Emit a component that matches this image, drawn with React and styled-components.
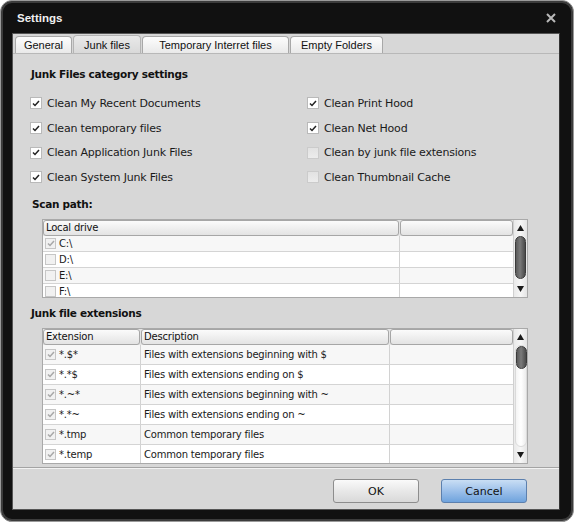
import React from "react";
import styled, { createGlobalStyle, css } from "styled-components";

const GlobalStyle = createGlobalStyle`
  html, body {
    margin: 0;
    padding: 0;
    background: #ffffff;
  }
  * {
    box-sizing: border-box;
  }
`;

const UI_FONT = `"DejaVu Sans", "Liberation Sans", sans-serif`;
const TAB_FONT = `"Liberation Sans", Arial, sans-serif`;

const Window = styled.div`
  width: 574px;
  height: 522px;
  background: #111111;
  border: 1px solid #9a9a9a;
  border-radius: 12px;
  box-shadow: inset 0 0 0 2px #3c3c3c;
  padding: 0 13px 11px 11px;
  display: flex;
  flex-direction: column;
  font-family: ${UI_FONT};
`;

const TitleBar = styled.div`
  height: 32px;
  display: flex;
  align-items: center;
  justify-content: space-between;
  padding: 2px 3px 0 5px;
`;

const Title = styled.span`
  color: #f0f0f0;
  font-family: ${TAB_FONT};
  font-size: 11.5px;
  font-weight: bold;
`;

const CloseButton = styled.div`
  width: 12px;
  height: 12px;
  display: flex;
  align-items: center;
  justify-content: center;
`;

const Client = styled.div`
  flex: 1;
  background: #d7d7d7;
  border: 1px solid #555;
  border-right-color: #333;
  display: flex;
  flex-direction: column;
`;

const TabBar = styled.div`
  display: flex;
  gap: 1px;
  padding: 0 0 0 2px;
  height: 19px;
  align-items: flex-end;
`;

const Tab = styled.div`
  width: ${(p) => p.$w}px;
  height: 17px;
  border: 1px solid #a8a8a8;
  border-bottom: none;
  border-radius: 4px 4px 0 0;
  font-family: ${TAB_FONT};
  font-size: 11px;
  color: #111;
  display: flex;
  align-items: center;
  justify-content: center;
  background: linear-gradient(#fdfdfd, #e9e9e9);
  ${(p) =>
    p.$active &&
    css`
      height: 18px;
      background: linear-gradient(#e9e9e9, #d9d9d9);
      border-color: #b4b4b4;
    `}
`;

const Panel = styled.div`
  flex: 1;
  border-top: 1px solid #b8b8b8;
  border-bottom: 1px solid #a4a4a4;
  padding: 12px 0 0 17px;
  display: flex;
  flex-direction: column;
`;

const Heading = styled.div`
  font-size: 10.5px;
  letter-spacing: -0.3px;
  font-weight: bold;
  color: #111;
  line-height: 16px;
  margin-left: ${(p) => p.$indent || 1}px;
  margin-top: ${(p) => p.$top || 0}px;
`;

const OptionGrid = styled.div`
  display: grid;
  grid-template-columns: 277px 1fr;
  grid-auto-rows: 24.7px;
  margin-top: 9px;
`;

const Option = styled.label`
  display: flex;
  align-items: center;
  gap: 5px;
  font-size: 11px;
  letter-spacing: -0.2px;
  color: #1a1a1a;
`;

const Box = styled.span`
  width: 12px;
  height: 12px;
  flex: none;
  display: flex;
  align-items: center;
  justify-content: center;
  border: 1px solid ${(p) => (p.$on ? "#b9b9b9" : "#cbcbcb")};
  background: ${(p) => (p.$on ? "#ffffff" : "linear-gradient(#e2e2e2, #ececec)")};
`;

const SmallBox = styled.span`
  width: 11px;
  height: 11px;
  flex: none;
  display: flex;
  align-items: center;
  justify-content: center;
  border: 1px solid #c6c6c6;
  background: #f1f1f1;
`;

const Table = styled.div`
  margin: 7px 0 0 12px;
  width: 486px;
  height: ${(p) => p.$h}px;
  border: 1px solid #a9a9a9;
  background: #ffffff;
  display: flex;
  overflow: hidden;
`;

const ListArea = styled.div`
  flex: 1;
  display: flex;
  flex-direction: column;
  overflow: hidden;
`;

const HeaderRow = styled.div`
  display: grid;
  grid-template-columns: ${(p) => p.$cols};
  height: 16px;
  flex: none;
  background: #e4e4e4;
`;

const HeaderCell = styled.div`
  border: 1px solid #a6a6a6;
  border-radius: 3px;
  background: linear-gradient(#fbfbfb, #e3e3e3);
  font-size: 10px;
  letter-spacing: -0.2px;
  color: #111;
  padding-left: 2px;
  display: flex;
  align-items: center;
  margin-right: 1px;
`;

const Row = styled.div`
  display: grid;
  grid-template-columns: ${(p) => p.$cols};
  height: ${(p) => p.$h}px;
  flex: none;
  border-bottom: 1px solid #d4d4d4;
  background: ${(p) => (p.$odd ? "#ffffff" : "#f7f7f7")};
`;

const Cell = styled.div`
  display: flex;
  align-items: center;
  gap: 3px;
  padding-left: ${(p) => p.$pad ?? 2}px;
  font-size: 10px;
  letter-spacing: -0.2px;
  color: #1a1a1a;
  border-right: 1px solid #d2d2d2;
  white-space: nowrap;
  overflow: hidden;
`;

const ScrollBar = styled.div`
  width: 14px;
  flex: none;
  background: linear-gradient(90deg, #e9e9e9, #f6f6f6, #e4e4e4);
  border-left: 1px solid #d0d0d0;
  display: flex;
  flex-direction: column;
  align-items: center;
`;

const Arrow = styled.div`
  height: 16px;
  flex: none;
  display: flex;
  align-items: center;
  justify-content: center;
`;

const Track = styled.div`
  flex: 1;
  width: 12px;
  border-radius: 6px;
  background: ${(p) => (p.$light ? "linear-gradient(90deg, #f4f4f4, #ffffff, #ececec)" : "transparent")};
  border: ${(p) => (p.$light ? "1px solid #dadada" : "none")};
`;

const Thumb = styled.div`
  height: ${(p) => p.$h}px;
  width: 11px;
  margin: 0 auto;
  border-radius: 6px;
  border: 1px solid #3a3a3a;
  background: linear-gradient(90deg, #5a5a5a, #7a7a7a 45%, #4a4a4a);
`;

const Footer = styled.div`
  height: 41px;
  display: flex;
  justify-content: flex-end;
  gap: 22px;
  padding: 10px 32px 0 0;
  border-top: 1px solid #f2f2f2;
`;

const Button = styled.button`
  width: 86px;
  height: 24px;
  border-radius: 3px;
  font-family: ${UI_FONT};
  font-size: 11px;
  color: #111;
  border: 1px solid #8d8d8d;
  background: linear-gradient(#fafafa, #e8e8e8 50%, #d9d9d9);
  ${(p) =>
    p.$primary &&
    css`
      border-color: #5c80ae;
      background: linear-gradient(#c9def4, #9cc0ea 50%, #6fa3dd);
    `}
`;

const Check = ({ color = "#222" }) => (
  <svg width="8" height="7" viewBox="0 0 8 7">
    <path d="M1 3.5 L3 5.5 L7 1" fill="none" stroke={color} strokeWidth="1.5" />
  </svg>
);

const ArrowIcon = ({ down }) => (
  <svg width="7" height="6" viewBox="0 0 7 6">
    <path d={down ? "M0 0 L7 0 L3.5 6 Z" : "M3.5 0 L7 6 L0 6 Z"} fill="#1a1a1a" />
  </svg>
);

const leftOptions = [
  ["Clean My Recent Documents", true],
  ["Clean temporary files", true],
  ["Clean Application Junk Files", true],
  ["Clean System Junk Files", true],
];

const rightOptions = [
  ["Clean Print Hood", true],
  ["Clean Net Hood", true],
  ["Clean by junk file extensions", false],
  ["Clean Thumbnail Cache", false],
];

const drives = [
  ["C:\\", true],
  ["D:\\", false],
  ["E:\\", false],
  ["F:\\", false],
];

const extensions = [
  ["*.$*", "Files with extensions beginning with $"],
  ["*.*$", "Files with extensions ending on $"],
  ["*.~*", "Files with extensions beginning with ~"],
  ["*.*~", "Files with extensions ending on ~"],
  ["*.tmp", "Common temporary files"],
  ["*.temp", "Common temporary files"],
];

const driveCols = "357px 114px";
const extCols = "98px 249px 124px";

export default function App() {
  const options = [];
  for (let i = 0; i < 4; i++) {
    options.push(leftOptions[i], rightOptions[i]);
  }

  return (
    <>
      <GlobalStyle />
      <Window>
        <TitleBar>
          <Title>Settings</Title>
          <CloseButton>
            <svg width="10" height="10" viewBox="0 0 10 10">
              <path d="M1 1 L9 9 M9 1 L1 9" stroke="#b9b9b9" strokeWidth="2" />
            </svg>
          </CloseButton>
        </TitleBar>
        <Client>
          <TabBar>
            <Tab $w={57}>General</Tab>
            <Tab $w={68} $active>
              Junk files
            </Tab>
            <Tab $w={147}>Temporary Interret files</Tab>
            <Tab $w={93}>Empty Folders</Tab>
          </TabBar>
          <Panel>
            <Heading>Junk Files category settings</Heading>
            <OptionGrid>
              {options.map(([label, on]) => (
                <Option key={label}>
                  <Box $on={on}>{on && <Check />}</Box>
                  {label}
                </Option>
              ))}
            </OptionGrid>
            <Heading $top={6} $indent={2}>
              Scan path:
            </Heading>
            <Table $h={79}>
              <ListArea>
                <HeaderRow $cols={driveCols}>
                  <HeaderCell>Local drive</HeaderCell>
                  <HeaderCell />
                </HeaderRow>
                {drives.map(([d, on], i) => (
                  <Row key={d} $cols={driveCols} $h={16} $odd={i % 2 === 1}>
                    <Cell>
                      <SmallBox>{on && <Check color="#a8a8a8" />}</SmallBox>
                      {d}
                    </Cell>
                    <Cell />
                  </Row>
                ))}
              </ListArea>
              <ScrollBar>
                <Arrow>
                  <ArrowIcon />
                </Arrow>
                <Track>
                  <Thumb $h={43} />
                </Track>
                <Arrow>
                  <ArrowIcon down />
                </Arrow>
              </ScrollBar>
            </Table>
            <Heading $top={7}>Junk file extensions</Heading>
            <Table $h={136}>
              <ListArea>
                <HeaderRow $cols={extCols}>
                  <HeaderCell>Extension</HeaderCell>
                  <HeaderCell>Description</HeaderCell>
                  <HeaderCell />
                </HeaderRow>
                {extensions.map(([ext, desc], i) => (
                  <Row key={ext} $cols={extCols} $h={20} $odd={i % 2 === 1}>
                    <Cell>
                      <SmallBox>
                        <Check color="#a8a8a8" />
                      </SmallBox>
                      {ext}
                    </Cell>
                    <Cell $pad={3}>{desc}</Cell>
                    <Cell />
                  </Row>
                ))}
              </ListArea>
              <ScrollBar>
                <Arrow>
                  <ArrowIcon />
                </Arrow>
                <Track $light>
                  <Thumb $h={23} />
                </Track>
                <Arrow>
                  <ArrowIcon down />
                </Arrow>
              </ScrollBar>
            </Table>
          </Panel>
          <Footer>
            <Button>OK</Button>
            <Button $primary>Cancel</Button>
          </Footer>
        </Client>
      </Window>
    </>
  );
}
